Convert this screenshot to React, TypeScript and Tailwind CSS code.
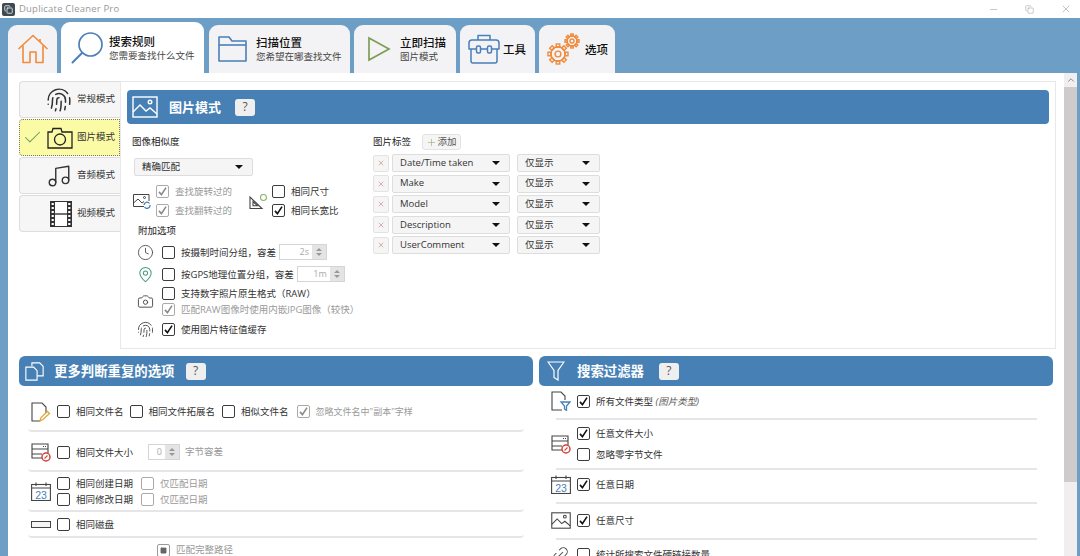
import type { ReactNode } from "react";
import clsx from "clsx";
import { Camera, Check, ChevronUp, Clock, Copy, Fingerprint, Link2, MapPin, Minus, Music, Plus, Square, X } from "lucide-react";

function Box({ checked, muted }: { checked?: boolean; muted?: boolean }) {
  return (
    <span
      className={clsx(
        "flex h-[13px] w-[13px] shrink-0 items-center justify-center rounded-[2px] border bg-white",
        muted ? "border-[#aaaaaa]" : "border-[#3c3c3c]",
      )}
    >
      {checked && (
        <svg viewBox="0 0 14 14" className="h-[13px] w-[13px]">
          <path d="M2.5 7.5 5.6 11 11.5 2" fill="none" stroke={muted ? "#8a8a8a" : "#111"} strokeWidth="2" />
        </svg>
      )}
    </span>
  );
}

function Opt({ label, checked, muted, small }: { label: ReactNode; checked?: boolean; muted?: boolean; small?: boolean }) {
  return (
    <label className="flex items-center gap-[6px] whitespace-nowrap">
      <Box checked={checked} muted={muted} />
      <span className={clsx("leading-[13px]", small ? "text-[9px]" : "text-[9.5px]", muted ? "text-[#9a9a9a]" : "text-[#333]")}>{label}</span>
    </label>
  );
}

function Caret() {
  return <span className="h-0 w-0 border-x-[4px] border-t-[4px] border-x-transparent border-t-[#111]" />;
}

function Select({ value, className }: { value: string; className: string }) {
  return (
    <div className={clsx("flex h-[18px] items-center justify-between rounded-[2px] border border-[#dddddd] bg-[#f5f5f5] pl-[7px] pr-[9px] text-[9.5px] text-[#333]", className)}>
      <span>{value}</span>
      <Caret />
    </div>
  );
}

function Spinner({ value, className }: { value: string; className: string }) {
  return (
    <div className={clsx("flex h-[16px] items-stretch border border-[#d5d5d5] bg-white text-[9px] text-[#aaa]", className)}>
      <span className="flex-1 pr-[3px] text-right leading-[14px]">{value}</span>
      <span className="flex w-[14px] flex-col justify-center bg-[#e4e4e4]">
        <span className="mx-auto h-0 w-0 border-x-[3px] border-b-[3px] border-x-transparent border-b-[#999]" />
        <span className="mx-auto mt-[2px] h-0 w-0 border-x-[3px] border-t-[3px] border-x-transparent border-t-[#999]" />
      </span>
    </div>
  );
}

function Help() {
  return <span className="flex h-[17px] w-[20px] items-center justify-center rounded-[3px] bg-[#efefef] text-[12px] font-normal text-[#555]">?</span>;
}

function ImageGlyph({ className }: { className: string }) {
  return (
    <svg viewBox="0 0 26 22" fill="none" stroke="currentColor" strokeWidth="1.4" className={className}>
      <rect x="1" y="1" width="24" height="20" />
      <path d="M1 16 8 9l6 6 4-3 7 6" />
      <circle cx="18" cy="6" r="1.8" />
    </svg>
  );
}

function Home() {
  return (
    <svg viewBox="0 0 32 30" fill="none" stroke="#f08a3c" strokeWidth="1.6" strokeLinejoin="round" className="h-[30px] w-[32px]">
      <path d="M1.5 15 16 1.5 30.5 15" />
      <path d="M6 11.5V28.5H13V18H19V28.5H26V11.5" />
      <path d="M23 5V8" />
    </svg>
  );
}

function Lens() {
  return (
    <svg viewBox="0 0 32 32" fill="none" stroke="#4a7fb8" className="h-[32px] w-[32px] shrink-0">
      <circle cx="19.5" cy="12.5" r="11.5" strokeWidth="1.7" />
      <path d="M11 21 1.5 30.5" strokeWidth="2" strokeLinecap="round" />
    </svg>
  );
}

function Folder() {
  return (
    <svg viewBox="0 0 32 30" fill="none" stroke="#4a7fb8" strokeWidth="1.6" strokeLinejoin="round" className="h-[30px] w-[32px] shrink-0">
      <path d="M2 27V3H12L15 7H29V27Z" />
      <path d="M2 11H29" />
    </svg>
  );
}

function Play() {
  return (
    <svg viewBox="0 0 24 26" fill="none" stroke="#7d9d55" strokeWidth="1.7" className="h-[26px] w-[24px] shrink-0">
      <path d="M2 2 22 13 2 24Z" />
    </svg>
  );
}

function Toolbox() {
  return (
    <svg viewBox="0 0 32 30" fill="none" stroke="#4a7fb8" strokeWidth="1.5" strokeLinejoin="round" className="h-[30px] w-[32px] shrink-0">
      <path d="M10 6V1.5H22V6" />
      <path d="M4 6H28A3 3 0 0 1 31 9V15H1V9A3 3 0 0 1 4 6Z" />
      <path d="M3 15V27A2 2 0 0 0 5 29H27A2 2 0 0 0 29 27V15" />
      <rect x="8.5" y="12" width="4" height="7" rx="1.5" fill="#f3f3f5" />
      <rect x="19.5" y="12" width="4" height="7" rx="1.5" fill="#f3f3f5" />
    </svg>
  );
}

function Gear({ cx, cy, r }: { cx: number; cy: number; r: number }) {
  const teeth = [0, 45, 90, 135, 180, 225, 270, 315];
  return (
    <g>
      {teeth.map((a) => (
        <rect key={a} x={cx - r * 0.22} y={cy - r * 1.25} width={r * 0.44} height={r * 0.4} transform={`rotate(${a} ${cx} ${cy})`} />
      ))}
      <circle cx={cx} cy={cy} r={r * 0.9} />
      <circle cx={cx} cy={cy} r={r * 0.36} />
    </g>
  );
}

function Gears() {
  return (
    <svg viewBox="0 0 34 32" fill="none" stroke="#f08a3c" strokeWidth="1.4" className="h-[32px] w-[34px] shrink-0">
      <Gear cx={11} cy={21} r={8} />
      <Gear cx={25} cy={8} r={5.6} />
    </svg>
  );
}

function PhotoCamera() {
  return (
    <svg viewBox="0 0 26 22" fill="none" stroke="#222" strokeWidth="1.3" className="h-[22px] w-[26px] shrink-0">
      <path d="M1 5H5L6 1.5H14L15 5H25V21H1Z" />
      <circle cx="13" cy="12.5" r="5.5" />
    </svg>
  );
}

function FilmStrip() {
  const holes = [2, 6, 10, 14, 18, 22];
  return (
    <svg viewBox="0 0 22 26" className="h-[26px] w-[22px] shrink-0">
      <rect x="0.5" y="0.5" width="21" height="25" fill="#fff" stroke="#333" />
      <rect x="0.5" y="0.5" width="4.5" height="25" fill="#333" />
      <rect x="17" y="0.5" width="4.5" height="25" fill="#333" />
      <path d="M5 13H17" stroke="#333" strokeWidth="1.4" />
      {holes.map((y) => (
        <g key={y} fill="#fff">
          <rect x="1.6" y={y} width="2.2" height="2" />
          <rect x="18.2" y={y} width="2.2" height="2" />
        </g>
      ))}
    </svg>
  );
}

function Docs() {
  return (
    <svg viewBox="0 0 22 22" fill="none" stroke="#fff" strokeWidth="1.3" className="h-[19px] w-[19px]">
      <path d="M8 5V1H17L21 5V16H14" />
      <path d="M1 6H10L14 10V21H1Z" />
    </svg>
  );
}

function SizeIcon() {
  return (
    <svg viewBox="0 0 20 19" fill="none" stroke="#444" strokeWidth="1.1" className="h-[19px] w-[20px]">
      <path d="M11 15H1V1H17V10" />
      <path d="M1 6H17M1 11H11" />
      <path d="M12 3.5H15" strokeDasharray="1 1" />
      <circle cx="15" cy="14" r="4" stroke="#d2453c" strokeWidth="1.5" />
      <path d="M13.5 15.5 16.5 12.5" stroke="#d2453c" />
    </svg>
  );
}

function CalendarIcon() {
  return (
    <svg viewBox="0 0 20 19" fill="none" stroke="#444" strokeWidth="1.1" className="h-[19px] w-[20px]">
      <rect x="0.6" y="2.5" width="18.8" height="16" />
      <path d="M1 6H19M5 0.5V4M15 0.5V4" />
      <text x="10" y="16.5" textAnchor="middle" fontSize="10.5" fill="#4a7fb8" stroke="none" fontFamily="'Liberation Sans', sans-serif">23</text>
    </svg>
  );
}

function FileEdit() {
  return (
    <svg viewBox="0 0 20 20" fill="none" stroke="#444" strokeWidth="1.1" className="h-[20px] w-[20px]">
      <path d="M9 19H1V1H11L15 5V11" />
      <path d="M9 19 10 15.5 16.5 9.5 18.5 11.5 12 17.5Z" stroke="#e0a93e" strokeWidth="1.3" />
    </svg>
  );
}

function FileFilter() {
  return (
    <svg viewBox="0 0 20 20" fill="none" stroke="#444" strokeWidth="1.1" className="h-[20px] w-[20px]">
      <path d="M11 19H1V1H10L14 5V9" />
      <path d="M10 11H19L15.5 15V19.5L13.5 18V15Z" stroke="#4a7fb8" strokeWidth="1.3" />
    </svg>
  );
}

function RotateIcon() {
  return (
    <svg viewBox="0 0 18 15" fill="none" stroke="#444" strokeWidth="1" className="h-[15px] w-[18px]">
      <path d="M11 12.5H0.5V0.5H16V7" />
      <path d="M0.5 9 5 5l4 4 2-1.5" />
      <circle cx="11.5" cy="3.5" r="1" />
      <path d="M11 11a3 3 0 0 1 5.5-1.5M17 11a3 3 0 0 1-5.5 2" stroke="#4a7fb8" strokeWidth="1.3" />
    </svg>
  );
}

function RulerIcon() {
  return (
    <svg viewBox="0 0 18 15" fill="none" stroke="#444" strokeWidth="1.1" className="h-[15px] w-[18px]">
      <path d="M1 14.5H13L1 3Z" />
      <path d="M4 11.8H8.5L4 7.5Z" />
      <circle cx="14.5" cy="3.5" r="3" stroke="#8fb66d" />
    </svg>
  );
}

function FilterIcon() {
  return (
    <svg viewBox="0 0 18 20" fill="none" stroke="#fff" strokeWidth="1.2" className="ml-[2px] h-[20px] w-[18px]">
      <path d="M1 1H17L11 9.5V19L7 16.5V9.5Z" />
    </svg>
  );
}

function TopTab({ icon, title, sub, className }: { icon: ReactNode; title: string; sub?: string; className: string }) {
  return (
    <div className={clsx("flex items-center rounded-t-[9px] whitespace-nowrap", className)}>
      {icon}
      <div className="flex flex-col">
        <span className="text-[11.5px] leading-[15px] font-medium text-[#111]">{title}</span>
        {sub && <span className="text-[9.5px] leading-[13px] text-[#444]">{sub}</span>}
      </div>
    </div>
  );
}

function ModeTab({ icon, label, active }: { icon: ReactNode; label: string; active?: boolean }) {
  return (
    <div
      className={clsx(
        "flex h-[37px] items-center justify-end rounded-l-[4px] whitespace-nowrap",
        active ? "gap-[4px] border border-dotted border-[#777] bg-[#fbfba6] pr-[4px]" : "gap-[5px] border border-r-0 border-[#dddddd] bg-[#f6f6f6] pr-[5px]",
      )}
    >
      {active && <Check className="mr-auto ml-[2px] h-[21px] w-[21px] shrink-0 text-[#6f9a58]" strokeWidth={1.2} />}
      {icon}
      <span className="text-[9.5px] text-[#333]">{label}</span>
    </div>
  );
}

function TagRow({ name }: { name: string }) {
  return (
    <div className="flex h-[18px] items-center">
      <span className="flex h-[17px] w-[16px] items-center justify-center rounded-[2px] border border-[#e3e3e3] bg-[#f5f5f5]">
        <X className="h-[8px] w-[8px] text-[#d27a7a]" strokeWidth={1.8} />
      </span>
      <Select value={name} className="ml-[3px] w-[118px]" />
      <Select value="仅显示" className="ml-[7px] w-[83px]" />
    </div>
  );
}

function SectionHead({ icon, title, titleClass, helpClass }: { icon: ReactNode; title: string; titleClass: string; helpClass: string }) {
  return (
    <div className="flex h-[30px] items-center rounded-t-[6px] rounded-b-[5px] bg-[#4680b5] pl-[6px] text-white">
      <span className="flex w-[29px] justify-start">{icon}</span>
      <span className={clsx("text-[13.4px] font-bold", titleClass)}>{title}</span>
      <span className={helpClass}>
        <Help />
      </span>
    </div>
  );
}

function LeftRow({ icon, h, children }: { icon?: ReactNode; h: string; children: ReactNode }) {
  return (
    <div className={clsx("ml-[9px] flex w-[496px] items-center rounded-b-[4px] border-b-2 border-[#e6e6ea] pl-[3px]", h)}>
      <span className="flex w-[26px] shrink-0">{icon}</span>
      {children}
    </div>
  );
}

function RightRow({ icon, h, children, last }: { icon?: ReactNode; h: string; children: ReactNode; last?: boolean }) {
  return (
    <div className={clsx("ml-[17px] flex w-[481px] items-center", h, !last && "border-b-2 border-[#e6e6ea]")}>
      <span className="-ml-[5px] flex w-[26px] shrink-0">{icon}</span>
      {children}
    </div>
  );
}

export default function App() {
  return (
    <div className="flex h-[556px] w-[1080px] flex-col overflow-hidden bg-[#6d9fc6] font-['Open_Sans','Noto_Sans_CJK_SC',sans-serif]">
      <div className="flex h-[18px] shrink-0 items-center bg-white pr-[8px] pl-[2px]">
        <span className="flex h-[13px] w-[13px] items-center justify-center rounded-[2px] bg-[#3d4a52]">
          <Copy className="h-[9px] w-[9px] text-white" strokeWidth={2} />
        </span>
        <span className="ml-[4px] text-[9.5px] tracking-[0.2px] text-[#999]">Duplicate Cleaner Pro</span>
        <div className="ml-auto flex items-center gap-[26px] text-[#888]">
          <Minus className="h-[11px] w-[11px]" strokeWidth={1} />
          <Copy className="h-[9px] w-[9px]" strokeWidth={1.2} />
          <X className="h-[12px] w-[12px]" strokeWidth={1} />
        </div>
      </div>

      <div className="flex h-[55px] shrink-0 items-end pl-[8px]">
        <div className="flex h-[48px] w-[49px] items-center justify-center rounded-t-[9px] bg-[#f3f3f5]">
          <Home />
        </div>
        <TopTab className="ml-[4px] h-[51px] w-[143px] gap-[6px] bg-white pl-[10px]" icon={<Lens />} title="搜索规则" sub="您需要查找什么文件" />
        <TopTab className="ml-[5px] h-[48px] w-[141px] gap-[7px] bg-[#f3f3f5] pl-[8px]" icon={<Folder />} title="扫描位置" sub="您希望在哪查找文件" />
        <TopTab className="ml-[4px] h-[48px] w-[102px] gap-[9px] bg-[#f3f3f5] pl-[13px]" icon={<Play />} title="立即扫描" sub="图片模式" />
        <TopTab className="ml-[4px] h-[48px] w-[75px] gap-[3px] bg-[#f3f3f5] pl-[8px]" icon={<Toolbox />} title="工具" />
        <TopTab className="ml-[4px] h-[48px] w-[76px] gap-[4px] bg-[#f3f3f5] pl-[8px]" icon={<Gears />} title="选项" />
      </div>

      <div className="flex min-h-0 flex-1 pr-[3px] pl-[8px]">
        <div className="w-[1056px] overflow-hidden bg-white pt-[8px] pl-[11px]">
          <div className="flex h-[268px]">
            <div className="flex w-[101px] flex-col gap-px">
              <ModeTab icon={<Fingerprint className="h-[26px] w-[26px] shrink-0 text-[#333]" strokeWidth={1.4} />} label="常规模式" />
              <ModeTab active icon={<PhotoCamera />} label="图片模式" />
              <ModeTab icon={<Music className="h-[26px] w-[26px] shrink-0 text-[#333]" strokeWidth={1.3} />} label="音频模式" />
              <ModeTab icon={<FilmStrip />} label="视频模式" />
            </div>

            <div className="w-[936px] border border-[#e8e8ec] pt-[8px]">
              <div className="mx-[6px] flex h-[34px] items-center rounded-[4px] bg-[#4680b5] pl-[5px] text-white">
                <ImageGlyph className="h-[22px] w-[26px]" />
                <span className="ml-[11px] pt-px text-[13px] font-bold">图片模式</span>
                <span className="ml-[14px]">
                  <Help />
                </span>
              </div>

              <div className="flex">
                <div className="ml-[11px] w-[241px]">
                  <div className="mt-[11px] h-[14px] text-[9.5px] leading-[14px] text-[#222]">图像相似度</div>
                  <Select value="精确匹配" className="mt-[9px] ml-[2px] w-[119px]" />

                  <div className="mt-[9px] flex items-center">
                    <span className="ml-[1px] flex w-[23px]">
                      <RotateIcon />
                    </span>
                    <div className="flex w-[93px] flex-col gap-[6px]">
                      <Opt muted checked label="查找旋转过的" />
                      <Opt muted checked label="查找翻转过的" />
                    </div>
                    <span className="flex w-[23px]">
                      <RulerIcon />
                    </span>
                    <div className="flex flex-col gap-[6px]">
                      <Opt label="相同尺寸" />
                      <Opt checked label="相同长宽比" />
                    </div>
                  </div>

                  <div className="mt-[7px] ml-[6px] h-[14px] text-[9.5px] leading-[14px] text-[#222]">附加选项</div>

                  <div className="mt-[6px] ml-[5px] flex h-[16px] items-center">
                    <Clock className="mr-[8px] h-[17px] w-[17px] text-[#444]" strokeWidth={1.2} />
                    <Opt label="按摄制时间分组，容差" />
                    <Spinner value="2s" className="ml-[3px] w-[48px]" />
                  </div>
                  <div className="mt-[6px] ml-[5px] flex h-[16px] items-center">
                    <MapPin className="mr-[8px] h-[17px] w-[17px] text-[#4f9e85]" strokeWidth={1.5} />
                    <Opt label="按GPS地理位置分组，容差" />
                    <Spinner value="1m" className="ml-[3px] w-[48px]" />
                  </div>
                  <div className="mt-[5px] ml-[5px] flex items-center">
                    <Camera className="mr-[8px] h-[17px] w-[17px] text-[#444]" strokeWidth={1.3} />
                    <div className="flex flex-col gap-[3px]">
                      <Opt label="支持数字照片原生格式（RAW）" />
                      <Opt muted checked label="匹配RAW图像时使用内嵌JPG图像（较快）" />
                    </div>
                  </div>
                  <div className="mt-[5px] ml-[5px] flex items-center">
                    <Fingerprint className="mr-[8px] h-[17px] w-[17px] text-[#444]" strokeWidth={1.3} />
                    <Opt checked label="使用图片特征值缓存" />
                  </div>
                </div>

                <div className="w-[228px]">
                  <div className="mt-[10px] flex h-[16px] items-center">
                    <span className="w-[49px] text-[9.5px] text-[#222]">图片标签</span>
                    <span className="flex h-[16px] w-[39px] items-center justify-center rounded-[3px] border border-[#e3e3e3] bg-[#f5f5f5] text-[9.5px] text-[#555]">
                      <Plus className="h-[11px] w-[11px] text-[#8aa870]" strokeWidth={1.2} />
                      添加
                    </span>
                  </div>
                  <div className="mt-[4px] flex flex-col gap-[2.6px]">
                    {["Date/Time taken", "Make", "Model", "Description", "UserComment"].map((name) => (
                      <TagRow key={name} name={name} />
                    ))}
                  </div>
                </div>
              </div>
            </div>
          </div>

          <div className="mt-[7px] flex gap-[6px]">
            <div className="w-[514px]">
              <SectionHead icon={<Docs />} title="更多判断重复的选项" titleClass="" helpClass="ml-[11px]" />
              <LeftRow h="h-[46px] pt-[7px]" icon={<FileEdit />}>
                <Opt label="相同文件名" />
                <span className="ml-[6px]">
                  <Opt label="相同文件拓展名" />
                </span>
                <span className="ml-[7px]">
                  <Opt label="相似文件名" />
                </span>
                <span className="ml-[8px]">
                  <Opt muted small checked label={'忽略文件名中"副本"字样'} />
                </span>
              </LeftRow>
              <LeftRow h="h-[40px] pt-[2px]" icon={<SizeIcon />}>
                <Opt label="相同文件大小" />
                <Spinner value="0" className="ml-[15px] w-[32px]" />
                <span className="ml-[5px] text-[9.5px] text-[#999]">字节容差</span>
              </LeftRow>
              <LeftRow h="h-[40px]" icon={<CalendarIcon />}>
                <div className="flex flex-col gap-[3px]">
                  <div className="flex items-center">
                    <span className="w-[84px]">
                      <Opt label="相同创建日期" />
                    </span>
                    <Opt muted label="仅匹配日期" />
                  </div>
                  <div className="flex items-center">
                    <span className="w-[84px]">
                      <Opt label="相同修改日期" />
                    </span>
                    <Opt muted label="仅匹配日期" />
                  </div>
                </div>
              </LeftRow>
              <LeftRow h="h-[26px]" icon={<span className="h-[7px] w-[20px] border border-[#444] bg-[#f5f5f5]" />}>
                <Opt label="相同磁盘" />
              </LeftRow>
              <div className="mt-[5px] ml-[138px] flex items-center gap-[6px]">
                <span className="flex h-[13px] w-[13px] items-center justify-center rounded-[2px] border border-[#999]">
                  <Square className="h-[7px] w-[7px] fill-[#666] text-[#666]" />
                </span>
                <span className="text-[9.5px] text-[#999]">匹配完整路径</span>
              </div>
            </div>

            <div className="w-[514px]">
              <SectionHead icon={<FilterIcon />} title="搜索过滤器" titleClass="ml-[3px]" helpClass="ml-[15px]" />
              <RightRow h="h-[34px] pb-[2px]" icon={<FileFilter />}>
                <Opt
                  checked
                  label={
                    <>
                      所有文件类型 <i className="text-[#555]">(图片类型)</i>
                    </>
                  }
                />
              </RightRow>
              <RightRow h="h-[50px]" icon={<SizeIcon />}>
                <div className="flex flex-col gap-[8px]">
                  <Opt checked label="任意文件大小" />
                  <Opt label="忽略零字节文件" />
                </div>
              </RightRow>
              <RightRow h="h-[34px] pb-[3px]" icon={<CalendarIcon />}>
                <Opt checked label="任意日期" />
              </RightRow>
              <RightRow h="h-[36px] pb-[2px]" icon={<ImageGlyph className="h-[17px] w-[20px] text-[#444]" />}>
                <Opt checked label="任意尺寸" />
              </RightRow>
              <RightRow last h="h-[28px]" icon={<Link2 className="h-[19px] w-[19px] -rotate-45 text-[#444]" strokeWidth={1.2} />}>
                <Opt label="统计所搜索文件硬链接数量" />
              </RightRow>
            </div>
          </div>
        </div>

        <div className="flex w-[13px] flex-col bg-[#f0eeee]">
          <span className="flex h-[14px] items-center justify-center">
            <ChevronUp className="h-[10px] w-[10px] text-[#777]" />
          </span>
          <span className="h-[395px] bg-[#cdcbcb]" />
        </div>
      </div>
    </div>
  );
}
